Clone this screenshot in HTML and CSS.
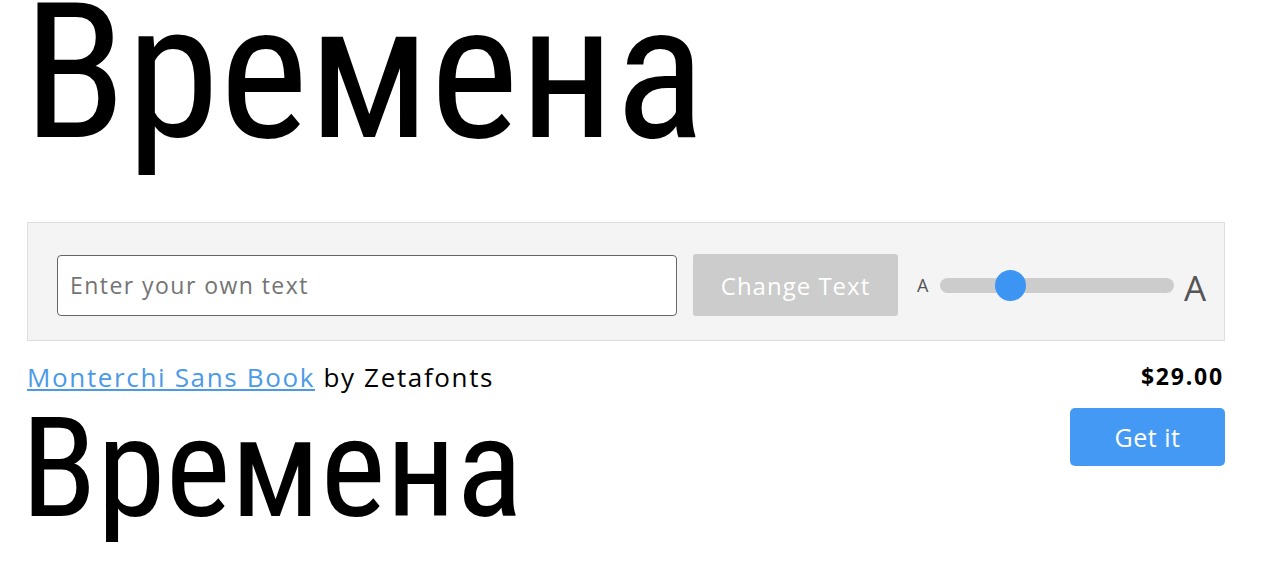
FILE: index.html
```html
<!DOCTYPE html>
<html lang="ru">
<head>
    <meta charset="UTF-8">
    <meta name="viewport" content="width=device-width, initial-scale=1.0">
    <title>Monterchi Sans Book</title>
    <link rel="stylesheet" href="styles.css">
</head>
<body>
    <div class="page">
        <div class="hero">Времена</div>

        <div class="toolbar">
            <input type="text" class="text-input" placeholder="Enter your own text">
            <button class="change-btn">Change Text</button>
            <div class="size-control">
                <span class="size-small">A</span>
                <div class="track">
                    <div class="thumb"></div>
                </div>
                <span class="size-big">A</span>
            </div>
        </div>

        <div class="result">
            <div class="result-info">
                <div class="font-name"><a href="#">Monterchi Sans Book</a> by Zetafonts</div>
                <div class="sample">Времена</div>
            </div>
            <div class="result-buy">
                <div class="price">$29.00</div>
                <button class="get-btn">Get it</button>
            </div>
        </div>
    </div>
</body>
</html>
```

FILE: styles.css
```css
body {
    margin: 0;
    background: white;
    font-family: "Open Sans", "Noto Sans", sans-serif;
    color: black;
}
.page {
    width: 1198px;
    padding-left: 27px;
}
.hero {
    font-family: "Roboto Condensed", Roboto, sans-serif;
    font-size: 189px;
    line-height: 145px;
    height: 222px;
    margin-left: -4px;
    white-space: nowrap;
}
.toolbar {
    display: flex;
    align-items: center;
    background-color: #f4f4f4;
    border: 1px solid #dedede;
    padding: 31px 15px 24px 29px;
}
.text-input {
    width: 620px;
    height: 61px;
    box-sizing: border-box;
    border: 1px solid #666;
    border-radius: 4px;
    padding: 0 12px;
    font-family: "Open Sans", sans-serif;
    font-size: 23px;
    letter-spacing: 1.45px;
    color: #333;
    background: white;
    outline: none;
}
.text-input::placeholder {
    color: #747474;
}
.change-btn {
    margin-left: 16px;
    width: 205px;
    height: 62px;
    border: none;
    border-radius: 3px;
    background-color: #cccccc;
    color: white;
    font-family: "Open Sans", sans-serif;
    font-size: 24px;
    letter-spacing: 1px;
}
.size-control {
    display: flex;
    align-items: center;
    margin-left: 19px;
    color: #555;
}
.size-small {
    font-size: 18px;
    width: 13px;
}
.track {
    position: relative;
    width: 234px;
    height: 15px;
    margin: 0 10px 0 10px;
    border-radius: 8px;
    background-color: #cccccc;
}
.thumb {
    position: absolute;
    left: 55px;
    top: -8px;
    width: 31px;
    height: 31px;
    border-radius: 50%;
    background-color: #3d95f3;
}
.size-big {
    font-size: 35px;
    line-height: 1;
    margin-top: 4px;
}
.result {
    display: flex;
    justify-content: space-between;
    padding-top: 18px;
}
.font-name {
    font-size: 26px;
    line-height: 36px;
    letter-spacing: 1.65px;
}
.font-name a {
    color: #4a9ae8;
}
.sample {
    font-family: "Roboto Condensed", Roboto, sans-serif;
    font-size: 139px;
    line-height: 147px;
    margin-left: -6px;
    white-space: nowrap;
}
.result-buy {
    display: flex;
    flex-direction: column;
    align-items: flex-end;
}
.price {
    font-size: 23px;
    font-weight: bold;
    line-height: 34px;
    letter-spacing: 1.8px;
    margin-right: 1px;
}
.get-btn {
    margin-top: 15px;
    width: 155px;
    height: 58px;
    border: none;
    border-radius: 5px;
    background-color: #4499f5;
    color: white;
    font-family: "Open Sans", sans-serif;
    font-size: 25px;
    letter-spacing: 0.5px;
}
```
